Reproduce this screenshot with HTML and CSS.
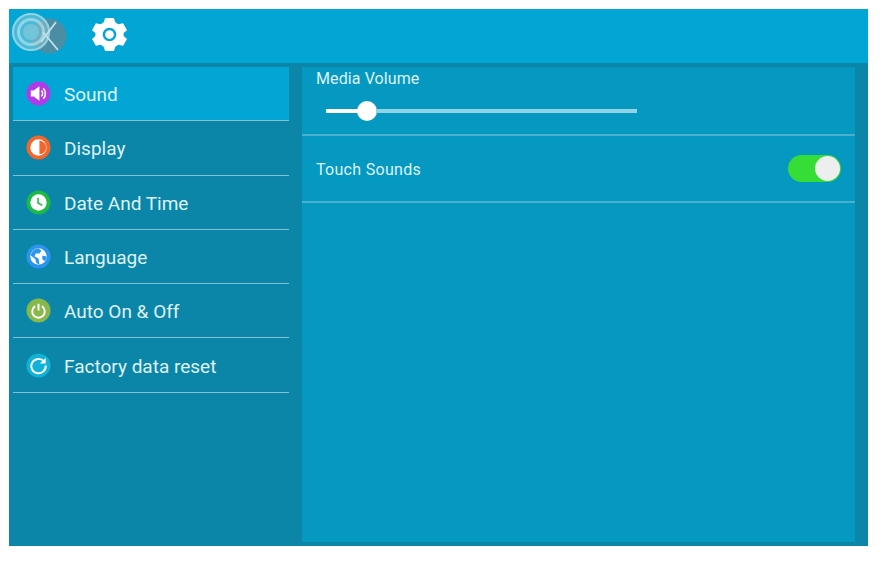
FILE: index.html
```html
<!DOCTYPE html>
<html lang="en">
<head>
    <meta charset="UTF-8">
    <title>Settings</title>
    <link rel="stylesheet" href="styles.css">
</head>
<body>

<div class="frame">
    <!-- HEADER -->
    <div class="top-bar">
        <svg class="logo" width="58" height="44" viewBox="0 0 58 44">
            <circle cx="38" cy="25" r="17.5" fill="#4b8ea3"/>
            <circle cx="20" cy="21" r="19" fill="#8fd0de" fill-opacity=".5"/>
            <circle cx="20" cy="21" r="18" fill="none" stroke="#a5d8e4" stroke-width="2" stroke-opacity=".8"/>
            <circle cx="20" cy="21" r="12.5" fill="none" stroke="#c4e6ee" stroke-width="3" stroke-opacity=".6"/>
            <circle cx="20" cy="21" r="8" fill="#72c4d8"/>
            <path d="M30 31 L45 11 M32 21 L47 39" stroke="#c2e2ea" stroke-width="1.8" fill="none"/>
        </svg>
        <svg class="gear" width="35" height="35" viewBox="0 0 36 36">
            <path fill="#fff" fill-rule="evenodd" d="M13.5 1 H22.5 L24 5.5 L27 7.5 L32 6.5 L36 13.5 L32.5 16.5 V19.5 L36 22.5 L32 29.5 L27 28.5 L24 30.5 L22.5 35 H13.5 L12 30.5 L9 28.5 L4 29.5 L0 22.5 L3.5 19.5 V16.5 L0 13.5 L4 6.5 L9 7.5 L12 5.5 Z M18 11 A7 7 0 1 0 18 25 A7 7 0 1 0 18 11 Z"/>
            <circle cx="18" cy="18" r="4.5" fill="#fff"/>
        </svg>
    </div>

    <div class="main">
        <!-- MENU -->
        <div class="menu">
            <div class="menu-item active">
                <svg class="menu-icon" viewBox="0 0 26 26">
                    <circle cx="13" cy="13" r="12.5" fill="#b23be8"/>
                    <path d="M5 10 H8 L14 5.5 V20.5 L8 16 H5 Z" fill="#fff"/>
                    <path d="M16 10 A4 4 0 0 1 16 16 M18 7.5 A8 8 0 0 1 18 18.5" fill="none" stroke="#fff" stroke-width="1.6"/>
                </svg>
                <span>Sound</span>
            </div>
            <div class="menu-item">
                <svg class="menu-icon" viewBox="0 0 26 26">
                    <circle cx="13" cy="13" r="12.5" fill="#f4672b"/>
                    <circle cx="13" cy="13" r="8.5" fill="#fff"/>
                    <path d="M14 6 A7 7 0 0 1 14 20 Z" fill="#f4672b"/>
                </svg>
                <span>Display</span>
            </div>
            <div class="menu-item">
                <svg class="menu-icon" viewBox="0 0 26 26">
                    <circle cx="13" cy="13" r="12.5" fill="#1db84a"/>
                    <circle cx="13" cy="13" r="8.5" fill="#fff"/>
                    <path d="M12.5 8 V13.5 L17 16" fill="none" stroke="#1db84a" stroke-width="1.6"/>
                </svg>
                <span>Date And Time</span>
            </div>
            <div class="menu-item">
                <svg class="menu-icon" viewBox="0 0 26 26">
                    <circle cx="13" cy="13" r="12.5" fill="#2b95ee"/>
                    <circle cx="13" cy="13" r="8.5" fill="#fff"/>
                    <path d="M13 4.5 L16 7 L14 10 L10 10 L9 13 L13 15 L14 21.5 L11 20 L9.5 15.5 L5 12 A8.5 8.5 0 0 1 13 4.5 Z M17 12 L21.5 13 L20 18 L17 16 Z" fill="#2b95ee"/>
                </svg>
                <span>Language</span>
            </div>
            <div class="menu-item">
                <svg class="menu-icon" viewBox="0 0 26 26">
                    <circle cx="13" cy="13" r="12.5" fill="#86b84a"/>
                    <path d="M9.5 8.5 A6.5 6.5 0 1 0 16.5 8.5" fill="none" stroke="#fff" stroke-width="2"/>
                    <path d="M13 6 V13" stroke="#fff" stroke-width="2"/>
                </svg>
                <span>Auto On &amp; Off</span>
            </div>
            <div class="menu-item">
                <svg class="menu-icon" viewBox="0 0 26 26">
                    <circle cx="13" cy="13" r="12.5" fill="#10b3d6"/>
                    <path d="M18.5 8.5 A7.5 7.5 0 1 0 20.5 13" fill="none" stroke="#fff" stroke-width="2"/>
                    <path d="M20.5 5 V11 H14.5 Z" fill="#fff"/>
                </svg>
                <span>Factory data reset</span>
            </div>
        </div>

        <!-- PANEL -->
        <div class="panel">
            <div class="volume-row">
                <label>Media Volume</label>
                <div class="slider">
                    <div class="slider-fill"></div>
                    <div class="slider-thumb"></div>
                    <div class="slider-rest"></div>
                </div>
            </div>
            <div class="touch-row">
                <label>Touch Sounds</label>
                <div class="switch"><div class="switch-knob"></div></div>
            </div>
        </div>
    </div>
</div>

</body>
</html>
```

FILE: styles.css
```css
body {
    margin: 0;
    padding: 9px 23px 24px 9px;
    background-color: white;
    font-family: Roboto, sans-serif;
    color: #dff2f7;
}

.frame {
    height: 537px;
    background-color: #0c86a8;
}

.top-bar {
    height: 54px;
    display: flex;
    align-items: center;
    background-color: #02a6d5;
}

.logo {
    margin-left: 2px;
    margin-top: -6px;
}

.gear {
    margin-left: 23px;
    margin-top: -3px;
}

.main {
    display: flex;
    padding: 4px 13px 4px 4px;
    height: 475px;
}

.menu {
    width: 276px;
    margin-right: 13px;
}

.menu-item {
    height: 53.3px;
    display: flex;
    align-items: center;
    padding-left: 13px;
    border-bottom: 1px solid #86c0d2;
    font-size: 19px;
}

.menu-item span {
    padding-top: 2px;
}

.menu-item.active {
    background-color: #02a6d5;
}

.menu-icon {
    width: 25px;
    height: 25px;
    margin-right: 13px;
}

.panel {
    flex: 1;
    background-color: #0599c1;
}

.panel label {
    font-size: 16px;
    letter-spacing: 0.2px;
}

.volume-row {
    height: 65px;
    padding-top: 2px;
    padding-left: 14px;
    padding-right: 14px;
    border-bottom: 2px solid #4bb0ce;
}

.volume-row label {
    display: block;
    letter-spacing: 0.1px;
}

.slider {
    display: flex;
    align-items: center;
    width: 311px;
    margin: 13px 0 0 10px;
}

.slider-fill {
    width: 32px;
    height: 4px;
    background-color: white;
}

.slider-thumb {
    width: 20px;
    height: 20px;
    margin-left: -1px;
    border-radius: 50%;
    background-color: white;
}

.slider-rest {
    flex: 1;
    height: 4px;
    margin-left: -1px;
    background-color: #8fd5e6;
}

.touch-row {
    height: 65px;
    display: flex;
    align-items: center;
    justify-content: space-between;
    padding: 0 14px;
    border-bottom: 2px solid #4bb0ce;
}

.touch-row label {
    letter-spacing: 0.3px;
    padding-top: 2px;
}

.switch {
    width: 52px;
    height: 27px;
    border-radius: 14px;
    background-color: #36dd36;
    display: flex;
    justify-content: flex-end;
    align-items: center;
    padding-right: 1px;
}

.switch-knob {
    width: 25px;
    height: 25px;
    border-radius: 50%;
    background-color: #eeeeee;
}
```
